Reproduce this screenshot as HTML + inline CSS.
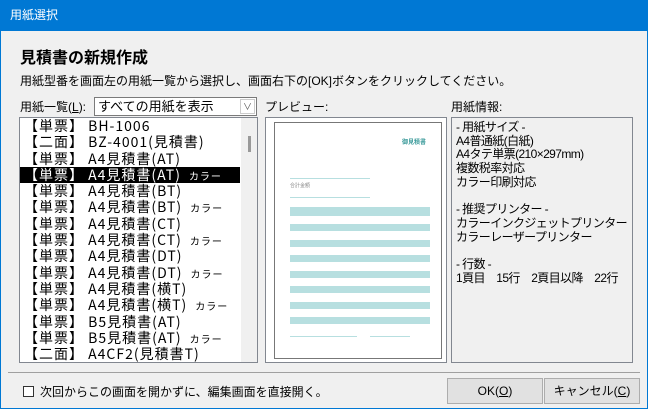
<!DOCTYPE html>
<html><head><meta charset="utf-8"><style>
*{margin:0;padding:0;box-sizing:border-box}
body{width:648px;height:409px;overflow:hidden;background:#f0f0f0;font-family:"Liberation Sans","Noto Sans CJK JP",sans-serif;font-size:12px;color:#000;position:relative}
.abs{position:absolute}
#tb{left:0;top:0;width:648px;height:31px;background:#0078d4;color:#fff;font-size:12px;line-height:31px;padding-left:10px}
#frame{left:0;top:31px;width:648px;height:378px;border:1px solid #0078d4;border-top:none}
#list{left:19px;top:117px;width:239px;height:246px;background:#fff;border:1px solid #828790;overflow:hidden}
.row{height:16.3px;line-height:16.3px;font-size:14px;padding-left:4px;white-space:nowrap;letter-spacing:1px;font-family:"Noto Sans CJK JP",sans-serif}
.row small{font-size:10px;margin-left:8px}
.sel{background:#000;color:#fff}
#sb{left:221px;top:0;width:17px;height:246px;background:#f0f0f0}
#thumb{left:7px;top:18px;width:3px;height:16px;background:#999}
#prev{left:265px;top:117px;width:182px;height:246px;background:#fff;border:1px solid #828790}
#page{left:8px;top:4px;width:168px;height:237px;border:1px solid #777;background:#fff}
.bar{position:absolute;left:15px;width:140px;height:7px;background:#b7dfe0}
#info{left:451px;top:117px;width:182px;height:246px;border:1px solid #828790;padding:3px 0 0 4px;font-size:12px;line-height:13.7px;white-space:nowrap;letter-spacing:-0.6px}
.btn{top:378px;height:26px;background:#e1e1e1;border:1px solid #adadad;text-align:center;line-height:24px;font-size:12px}
</style></head><body>
<div id="tb" class="abs">用紙選択</div>
<div id="frame" class="abs"></div>
<div class="abs" style="left:20px;top:44px;font-size:16px;font-weight:bold">見積書の新規作成</div>
<div class="abs" style="left:20px;top:72px">用紙型番を画面左の用紙一覧から選択し、画面右下の[OK]ボタンをクリックしてください。</div>
<div class="abs" style="left:20px;top:98px">用紙一覧(<u>L</u>):</div>
<div class="abs" style="left:94px;top:97px;width:163px;height:19px;background:#fff;border:1px solid #7a7a7a;padding-left:3px;line-height:17px;font-size:13px">すべての用紙を表示<span class="abs" style="right:1px;top:1px;width:15px;height:15px;border:1px solid #ccc;font-size:9px;text-align:center;line-height:14px;color:#555">∨</span></div>
<div class="abs" style="left:265px;top:98px">プレビュー:</div>
<div class="abs" style="left:451px;top:98px">用紙情報:</div>
<div id="list" class="abs">
<div class="row">【単票】 BH-1006</div>
<div class="row">【二面】 BZ-4001(見積書)</div>
<div class="row">【単票】 A4見積書(AT)</div>
<div class="row sel" style="width:220px">【単票】 A4見積書(AT)<small>カラー</small></div>
<div class="row">【単票】 A4見積書(BT)</div>
<div class="row">【単票】 A4見積書(BT)<small>カラー</small></div>
<div class="row">【単票】 A4見積書(CT)</div>
<div class="row">【単票】 A4見積書(CT)<small>カラー</small></div>
<div class="row">【単票】 A4見積書(DT)</div>
<div class="row">【単票】 A4見積書(DT)<small>カラー</small></div>
<div class="row">【単票】 A4見積書(横T)</div>
<div class="row">【単票】 A4見積書(横T)<small>カラー</small></div>
<div class="row">【単票】 B5見積書(AT)</div>
<div class="row">【単票】 B5見積書(AT)<small>カラー</small></div>
<div class="row">【二面】 A4CF2(見積書T)</div>
<div class="row">【二面】 A4CF2(見積書T)<small>カラー</small></div>
<div id="sb" class="abs"><div id="thumb" class="abs"></div></div>
</div>
<div id="prev" class="abs"><div id="page" class="abs">
<div class="abs" style="left:127px;top:14px;font-size:6px;color:#3a9a9a;font-weight:bold">御見積書</div>
<div class="abs" style="left:15px;top:55px;width:80px;height:1px;background:#b7dfe0"></div>
<div class="abs" style="left:15px;top:59px;font-size:5px;color:#888">合計金額</div>
<div class="abs" style="left:15px;top:74px;width:80px;height:1px;background:#b7dfe0"></div>
<div class="bar" style="top:84px;height:9px"></div>
<div class="bar" style="top:101px"></div><div class="bar" style="top:117px"></div><div class="bar" style="top:132px"></div><div class="bar" style="top:148px"></div><div class="bar" style="top:163px"></div><div class="bar" style="top:179px"></div><div class="bar" style="top:194px"></div>
<div class="abs" style="left:15px;top:213px;width:67px;height:1px;background:#b7dfe0"></div>
<div class="abs" style="left:95px;top:213px;width:40px;height:1px;background:#b7dfe0"></div>
</div></div>
<div id="info" class="abs">- 用紙サイズ -<br>A4普通紙(白紙)<br>A4タテ単票(210×297mm)<br>複数税率対応<br>カラー印刷対応<br><br>- 推奨プリンター -<br>カラーインクジェットプリンター<br>カラーレーザープリンター<br><br>- 行数 -<br>1頁目　15行　2頁目以降　22行</div>
<div class="abs" style="left:8px;top:372px;width:632px;height:1px;background:#a0a0a0"></div>
<div class="abs" style="left:23px;top:386px;width:11px;height:11px;border:1px solid #333;background:#fff"></div>
<div class="abs" style="left:40px;top:383px">次回からこの画面を開かずに、編集画面を直接開く。</div>
<div class="btn abs" style="left:447px;width:96px">OK(<u>O</u>)</div>
<div class="btn abs" style="left:544px;width:96px">キャンセル(<u>C</u>)</div>
</body></html>
